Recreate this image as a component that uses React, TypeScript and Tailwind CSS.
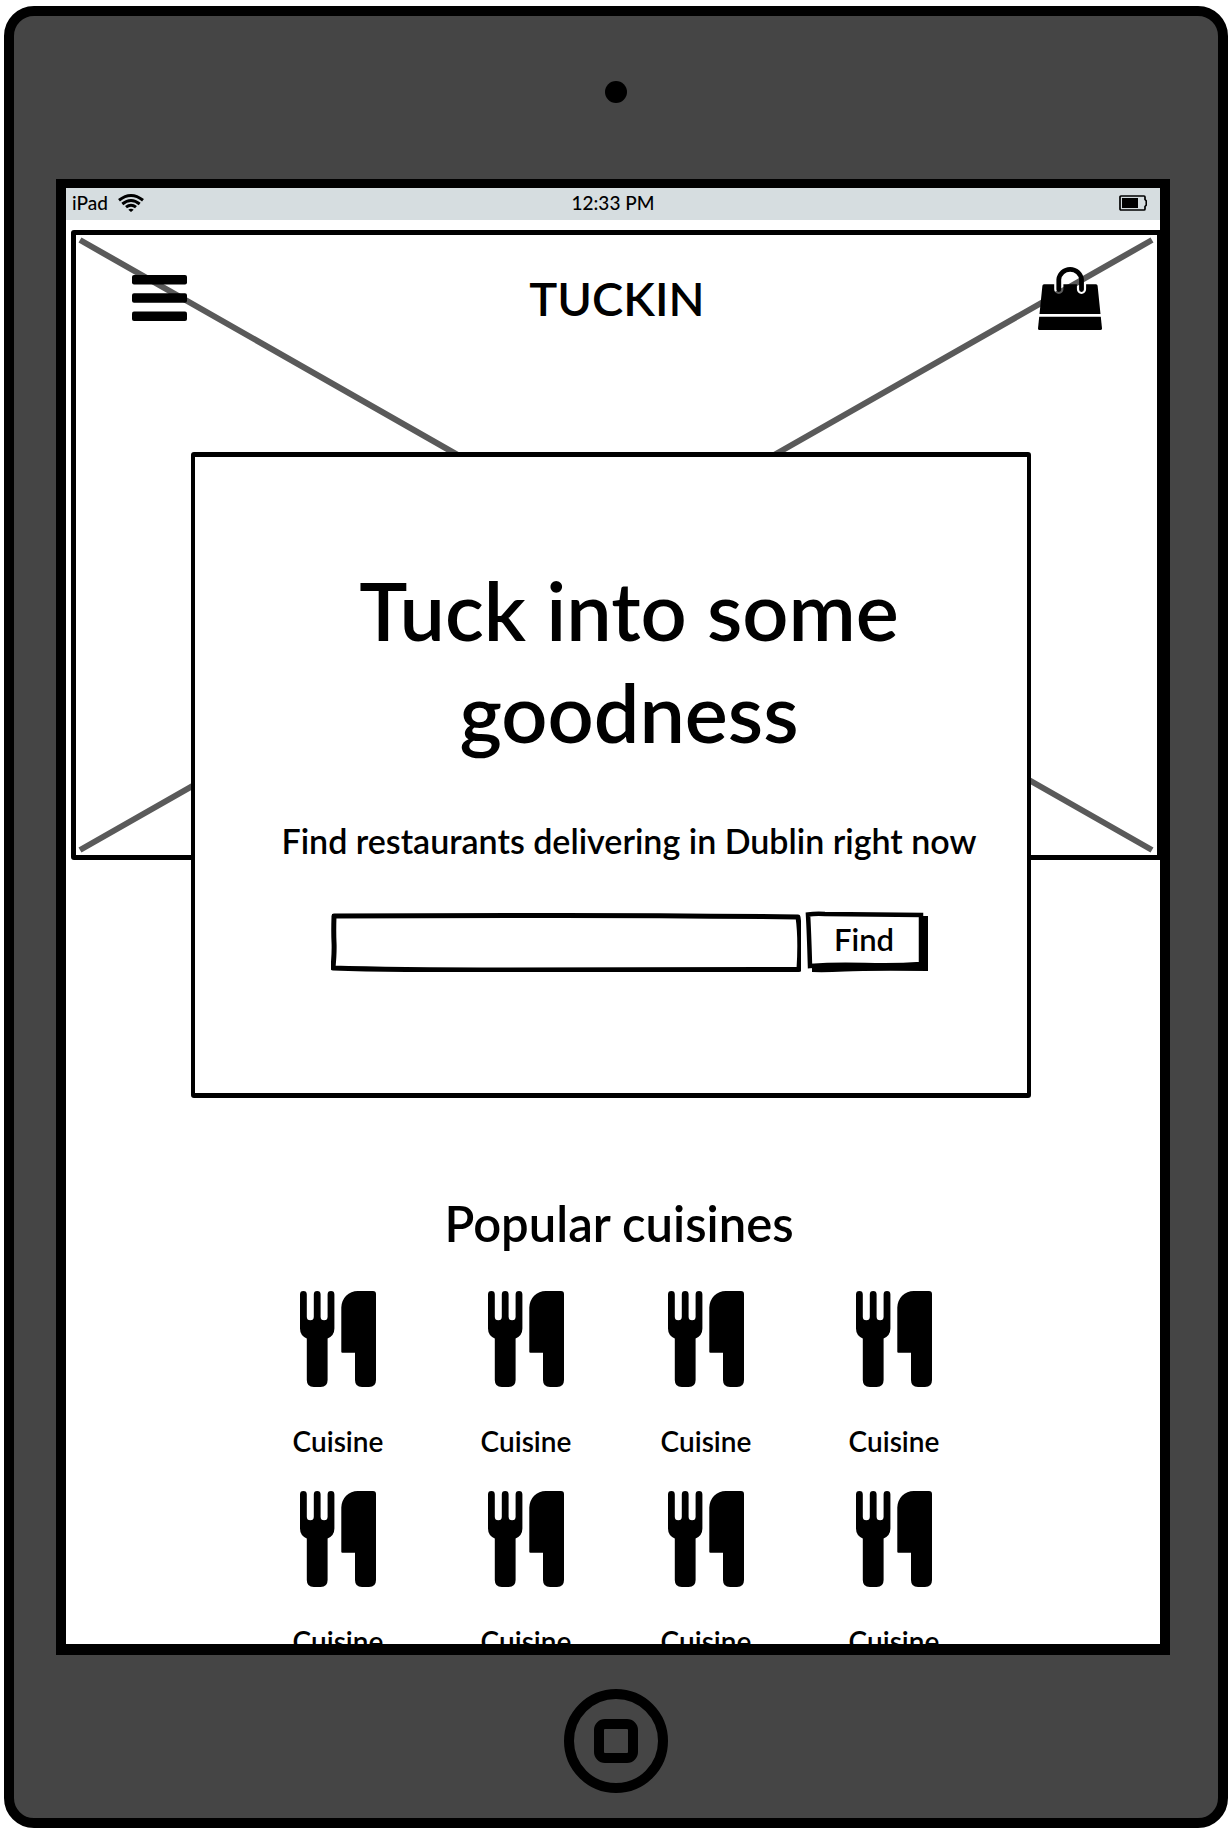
import React from "react";

const cuisines = Array.from({ length: 8 }, (_, i) => ({ id: i, name: "Cuisine" }));

function WifiIcon() {
  return (
    <svg viewBox="0 0 26 18" className="h-[18px] w-[26px]" fill="none" stroke="#000" strokeWidth="3" aria-hidden="true">
      <path d="M1 6.3Q13 -3.2 25 6.3" />
      <path d="M4.3 10Q13 3 21.7 10" />
      <path d="M8 13.2Q13 9.2 18 13.2" />
      <path d="M10.3 15.8Q13 13.8 15.7 15.8L13 18Z" fill="#000" stroke="none" />
    </svg>
  );
}

function BatteryIcon() {
  return (
    <svg viewBox="0 0 28 16" className="h-4 w-7" aria-label="Battery">
      <path
        d="M2 1H25Q26 1 26 2V4.5L27.3 6V10L26 11.5V14Q26 15 25 15H2Q1 15 1 14V2Q1 1 2 1Z"
        fill="none"
        stroke="#000"
        strokeWidth="1.7"
      />
      <path d="M3 3H19V13H3Z" />
    </svg>
  );
}

function MenuIcon() {
  return (
    <svg viewBox="0 0 55 46" className="h-[46px] w-[55px]" aria-hidden="true">
      <rect width="55" height="9.4" rx="2" />
      <rect y="18.3" width="55" height="9.4" rx="2" />
      <rect y="36.6" width="55" height="9.4" rx="2" />
    </svg>
  );
}

function BagIcon() {
  return (
    <svg viewBox="0 0 64 64" className="size-16" aria-hidden="true">
      <path d="M6 18.3H16.2V23.3A4.6 4.6 0 0 0 25.4 23.3V18.3H38.9V23.3A4.6 4.6 0 0 0 48.1 23.3V18.3H58Q59.4 18.3 59.6 19.8L62.5 48H1.5L4.4 19.8Q4.6 18.3 6 18.3Z" />
      <path d="M1.3 48H62.7V51H1.3Z" fill="#fff" />
      <path d="M1.2 50.8H62.8L64 62.4Q64 64 62.4 64H1.6Q0 64 0 62.4Z" />
      <path d="M20.8 23.5V13.5A11.4 11.2 0 0 1 43.5 13.5V23.5" fill="none" stroke="#000" strokeWidth="4.8" strokeLinecap="round" />
    </svg>
  );
}

function CutleryIcon() {
  return (
    <svg viewBox="0 0 76 96" className="h-24 w-[76px]" aria-hidden="true">
      <path d="M0 3.4A3.4 3.4 0 0 1 6.8 3.4V25.8A3.5 3.5 0 0 0 13.8 25.8V3.4A3.4 3.4 0 0 1 20.6 3.4V25.8A3.5 3.5 0 0 0 27.6 25.8V3.4A3.4 3.4 0 0 1 34.4 3.4V37.5Q34.4 44.5 27.6 47.5V89Q27.6 96 20.6 96H13.8Q6.8 96 6.8 89V47.5Q0 44.5 0 37.5Z" />
      <path d="M41.3 16.5A16.5 16.5 0 0 1 57.8 0H73Q76 0 76 3V89Q76 96 69 96H62Q55 96 55 89V61.7H42.3Q41.3 61.7 41.3 60.7Z" />
    </svg>
  );
}

export default function App() {
  return (
    <div className="flex h-screen flex-col bg-white px-1 pt-1.5 pb-1 font-['Lato',sans-serif] font-semibold text-black">
      <div className="flex min-h-0 flex-1 flex-col rounded-[30px] border-10 border-black bg-[#454545] pr-12 pl-[42px]">
        <div className="flex h-[163px] shrink-0 justify-center pt-[65px] pl-1.5">
          <span className="size-[22px] rounded-full bg-black" />
        </div>

        <div className="flex min-h-0 flex-1 flex-col overflow-hidden border-x-10 border-t-9 border-b-11 border-black bg-white">
          <div className="grid h-8 shrink-0 grid-cols-[1fr_auto_1fr] items-center bg-[#d6dde0] px-1.5 pb-0.5 text-[19px] leading-6 font-medium">
            <div className="flex items-center gap-2.5">
              <span>iPad</span>
              <WifiIcon />
            </div>
            <span>12:33 PM</span>
            <div className="flex justify-end pr-[7px]">
              <BatteryIcon />
            </div>
          </div>

          <main className="relative">
            <div className="absolute top-2.5 -right-0.5 left-[5px] h-[630px] rounded-[3px] border-5 border-black">
              <svg viewBox="0 0 1081 620" preserveAspectRatio="none" className="size-full" aria-hidden="true">
                <path d="M4 5L1076 615M1076 5L4 615" stroke="#5a5a5a" strokeWidth="6" />
              </svg>
            </div>

            <div className="relative">
              <header className="grid grid-cols-[1fr_auto_1fr] items-center pt-[46px] pr-[58px] pl-[66px]">
                <button type="button" aria-label="Menu" className="justify-self-start">
                  <MenuIcon />
                </button>
                <h1 className="text-[47px] leading-[58px]">TUCKIN</h1>
                <button type="button" aria-label="Basket" className="justify-self-end">
                  <BagIcon />
                </button>
              </header>

              <section className="mt-[122px] mr-[129px] ml-[125px] rounded-[3px] border-x-4 border-y-5 border-black bg-white pt-[102px] pb-[120px] pl-9 text-center">
                <h2 className="text-[81px] leading-[102px]">
                  Tuck into some
                  <br />
                  goodness
                </h2>
                <p className="mt-[58px] text-[34px] leading-10">Find restaurants delivering in Dublin right now</p>
                <form className="mt-[50px] flex items-center justify-center gap-1" onSubmit={(e) => e.preventDefault()}>
                  <div className="relative h-[60px] w-[470px]">
                    <svg viewBox="0 0 470 60" preserveAspectRatio="none" className="absolute inset-0 size-full" fill="none" aria-hidden="true">
                      <path
                        d="M3 4Q120 3.500 230 3.500T467 5Q470 26 468 57.500Q300 58 180 58T2 56Q3.500 40 3 30T3 4Z"
                        stroke="#000"
                        strokeWidth="5"
                        strokeLinejoin="round"
                      />
                    </svg>
                    <input
                      type="text"
                      aria-label="Location"
                      className="relative size-full bg-transparent px-4 text-[28px] outline-none"
                    />
                  </div>
                  <button type="submit" className="relative h-[62px] w-[123px] pr-1 pb-[7px] text-[31px] leading-[38px]">
                    <svg viewBox="0 0 123 62" preserveAspectRatio="none" className="absolute inset-0 size-full" aria-hidden="true">
                      <path d="M7 5H123V60Q60 59.500 40 60.500T7 61Z" />
                      <path d="M3 3.500Q10 2.500 20 3L116 4V53Q90 55 60 54T5 55Q4 20 3 3.500Z" fill="#fff" stroke="#000" strokeWidth="4.500" />
                    </svg>
                    <span className="relative">Find</span>
                  </button>
                </form>
              </section>

              <section className="mt-24 pl-1.5">
                <h2 className="pl-1.5 text-center text-[49px] leading-[58px]">Popular cuisines</h2>
                <ul className="mt-[39px] grid grid-cols-[188px_180px_188px_94px] justify-center gap-y-[33px]">
                  {cuisines.map((c) => (
                    <li key={c.id}>
                      <a href="#cuisine" className="flex w-[94px] flex-col items-center gap-[37px]">
                        <CutleryIcon />
                        <span className="text-[28px] leading-[34px]">{c.name}</span>
                      </a>
                    </li>
                  ))}
                </ul>
              </section>
            </div>
          </main>
        </div>

        <div className="flex h-[163px] shrink-0 justify-center pt-[34px] pl-1.5">
          <button
            type="button"
            aria-label="Home"
            className="flex size-[104px] items-center justify-center rounded-full border-10 border-black"
          >
            <span className="size-11 rounded-[11px] border-10 border-black" />
          </button>
        </div>
      </div>
    </div>
  );
}
